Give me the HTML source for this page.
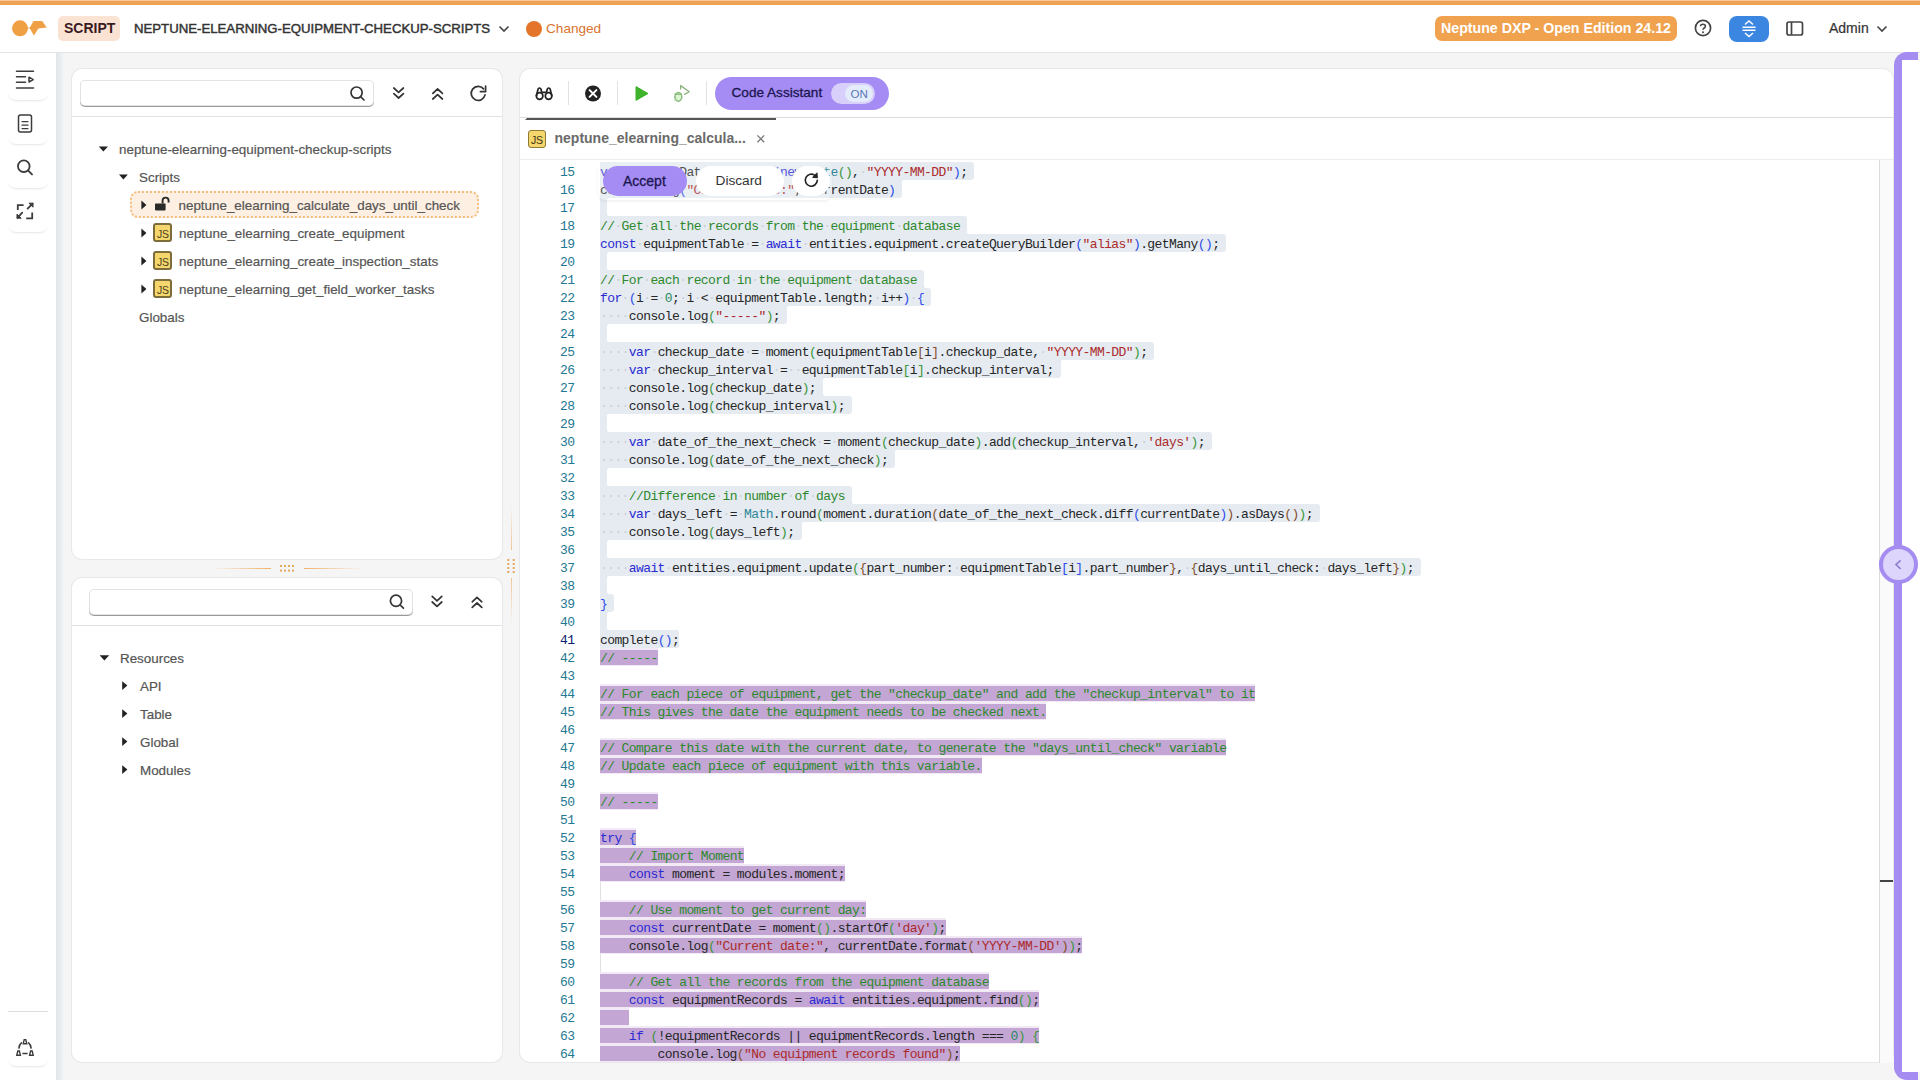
<!DOCTYPE html>
<html><head><meta charset="utf-8">
<style>
*{box-sizing:border-box;margin:0;padding:0}
html,body{width:1920px;height:1081px;overflow:hidden;background:#f5f5f5;font-family:"Liberation Sans",sans-serif;color:#333}
.abs{position:absolute}
#topbar{position:absolute;left:0;top:0;width:1920px;height:5px;background:#efa352;border-top:1px solid #f7c99a}
#header{position:absolute;left:0;top:5px;width:1920px;height:48px;background:#fff;border-bottom:1px solid #e4e4e4}
#sidebar{position:absolute;left:0;top:53px;width:56px;height:1028px;background:#fff}
#sideshade{position:absolute;left:56px;top:53px;width:8px;height:1028px;background:linear-gradient(90deg,#e3e5e7,#eaeef1 60%,#f5f5f5)}
.card{position:absolute;background:#fff;border-radius:10px;box-shadow:0 0 0 1px #e8e8e8}
.input{position:absolute;background:#fff;border-radius:4px;box-shadow:0 0 0 1px #e3e3e3, 0 1px 0 1px #9a9a9a}
svg{position:absolute;overflow:visible}
.t{position:absolute;white-space:pre}
.tree{font-size:13.4px;color:#555;-webkit-text-stroke:0.2px #555}
.jsi{position:absolute;width:19px;height:19px;background:#f4d66c;border:2px solid #7d6c3c;border-radius:3px}
.jsi span{position:absolute;left:2px;top:4px;font-size:10.5px;line-height:11px;color:#4a3f1c;letter-spacing:-0.3px}
.cl{position:absolute;left:600px;font-family:"Liberation Mono",monospace;font-size:13px;letter-spacing:-0.6px;white-space:pre;line-height:18px;height:18px;margin-top:2px;color:#262626}
.cl i{font-style:normal}
.cl .kw{color:#2a2ad2}.cl .com{color:#2d882d}.cl .str{color:#ac2a2a}.cl .num{color:#2a8a60}.cl .cls{color:#2f8798}
.cl .ws{color:#c9ced4;font-weight:normal}
.ln{position:absolute;left:520px;width:54.5px;text-align:right;font-family:"Liberation Mono",monospace;font-size:13px;letter-spacing:-0.6px;line-height:18px;margin-top:2px;color:#237893}
.ln.act{color:#0b216f}
.sel{position:absolute;left:600px;height:18px;background:#e5ebf1}
.cc{position:absolute;width:3px;height:3px}
.psel{position:absolute;left:600px;height:15px;background:#c3a6d4}
.psel2{position:absolute;left:600px;height:18px;background:#f1eaf5}
.pemp{position:absolute;left:600px;width:1px;height:18px;background:#e0e0e0}
</style></head>
<body>
<div id="topbar"></div>
<div id="header"></div>
<svg style="left:0;top:0" width="60" height="52"><circle cx="20" cy="28.3" r="8" fill="#f0a044"/><path d="M29.6 28 L33.5 21 L42.2 21 L46.7 27.6 L38.4 28.6 L33.9 35.6 Z" fill="#f0a044"/><path d="M27 28H31" stroke="#f0a044" stroke-width="0.8"/></svg>
<div class="abs" style="left:58px;top:16px;width:62px;height:25px;background:#fbe3d3;border-radius:5px"></div>
<div class="t" style="left:64px;top:20px;font-size:14px;font-weight:bold;color:#3a1a22;line-height:17px">SCRIPT</div>
<div class="t" style="left:134px;top:20px;font-size:13.2px;color:#333;line-height:17px;-webkit-text-stroke:0.45px #333">NEPTUNE-ELEARNING-EQUIPMENT-CHECKUP-SCRIPTS</div>
<svg style="left:498px;top:24.5px" width="12" height="8"><path d="M1.5 1.5 L6 6 L10.5 1.5" fill="none" stroke="#444" stroke-width="1.6"/></svg>
<div class="abs" style="left:526px;top:21px;width:16px;height:16px;border-radius:50%;background:#e4742a"></div>
<div class="t" style="left:546px;top:20px;font-size:13.6px;color:#d9742e;line-height:17px">Changed</div>
<div class="abs" style="left:1435px;top:16px;width:242px;height:25px;background:#f0a24f;border-radius:7px"></div>
<div class="t" style="left:1441px;top:20px;font-size:14.2px;font-weight:bold;color:#fff;line-height:17px">Neptune DXP - Open Edition 24.12</div>
<svg style="left:1694px;top:19px" width="18" height="18"><circle cx="9" cy="9" r="7.6" fill="none" stroke="#444" stroke-width="1.7"/><path d="M6.6 7.2 C6.6 4.6 11.4 4.6 11.4 7.2 C11.4 9 9 9 9 10.8" fill="none" stroke="#444" stroke-width="1.6"/><circle cx="9" cy="13.2" r="1" fill="#444"/></svg>
<div class="abs" style="left:1729px;top:15.5px;width:40px;height:26px;background:#3a86e0;border-radius:8px"></div>
<svg style="left:1729px;top:15px" width="40" height="27"><path d="M16 9.5 L20 6 L24 9.5 M16 18 L20 21.5 L24 18" fill="none" stroke="#fff" stroke-width="1.5"/><path d="M13.5 12.3 H26.5 M13.5 15.3 H26.5" stroke="#fff" stroke-width="1.4"/></svg>
<svg style="left:1786px;top:21px" width="18" height="16"><rect x="1" y="1" width="15.5" height="13" rx="2" fill="none" stroke="#444" stroke-width="1.7"/><path d="M5.5 1 V14" stroke="#444" stroke-width="1.7"/></svg>
<div class="t" style="left:1829px;top:20px;font-size:14px;color:#333;line-height:17px;-webkit-text-stroke:0.2px #333">Admin</div>
<svg style="left:1876px;top:24.5px" width="12" height="8"><path d="M1.5 1.5 L6 6 L10.5 1.5" fill="none" stroke="#444" stroke-width="1.6"/></svg>
<div id="sidebar"></div>
<div id="sideshade"></div>

<!-- sidebar icons -->
<div class="abs" style="left:8px;top:62px;width:40px;height:38px;border-radius:8px;box-shadow:0 2px 2px -1px #e6e6e6"></div>
<div class="abs" style="left:8px;top:106px;width:40px;height:38px;border-radius:8px;box-shadow:0 2px 2px -1px #e6e6e6"></div>
<div class="abs" style="left:8px;top:150px;width:40px;height:38px;border-radius:8px;box-shadow:0 2px 2px -1px #e6e6e6"></div>
<div class="abs" style="left:8px;top:194px;width:40px;height:38px;border-radius:8px;box-shadow:0 2px 2px -1px #e6e6e6"></div>
<svg style="left:0;top:60px" width="56" height="180">
 <g fill="none" stroke="#3c3c3c" stroke-width="1.5" stroke-linecap="round">
  <path d="M16.5 11.2H33.5M16.5 16.8H25.5M16.5 22.2H25.5M16.5 28H33.5"/>
  <path d="M29 17.2L33.2 19.6L29 22Z" stroke-linejoin="round"/>
  <rect x="18.5" y="55" width="13" height="17" rx="2"/>
  <path d="M22 61.6H28M22 65.2H28M22 68.6H28" stroke-width="1.2"/>
  <circle cx="23.8" cy="106.2" r="5.8" stroke-width="1.8"/>
  <path d="M28.2 110.6L32 114.4" stroke-width="1.9"/>
  <path d="M17.8 150V145.2H23.6M32.2 152.4V158.4H26.2" stroke-width="1.8" stroke-linecap="butt"/>
  <path d="M27.6 148.6L32.6 143.6M22.2 152.6L17.4 157.8" stroke-width="1.8"/>
 </g>
 <path d="M29 143.2H33V147.2Z M17 154V158.2H21.2Z" fill="#3c3c3c" stroke="#3c3c3c" stroke-width="1"/>
</svg>
<div class="abs" style="left:8px;top:1011px;width:40px;height:1px;background:#dedede"></div>
<div class="abs" style="left:8px;top:1028px;width:40px;height:38px;border-radius:8px;box-shadow:0 2px 2px -1px #e6e6e6"></div>
<svg style="left:0;top:1030px" width="56" height="40" fill="none" stroke="#3c3c3c" stroke-width="1.4">
 <path d="M23.2 13.8L24.2 9.6H25.8L26.8 13.8Z M16.8 25.2L17.8 21H19.4L20.4 25.2Z M29.6 25.2L30.6 21H32.2L33.2 25.2Z"/>
 <path d="M21.8 12.4C19.8 14 19 16.4 18.8 18.6M28.2 12.4C30.2 14 31 16.4 31.2 18.6M22.4 23.4H27.6" stroke-width="1.5"/>
</svg>

<!-- left top card -->
<div class="card" style="left:72px;top:69px;width:430px;height:490px"></div>
<div class="input" style="left:81px;top:81px;width:292px;height:24px"></div>
<div class="abs" style="left:72px;top:116px;width:430px;height:1px;background:#e3e3e3"></div>
<svg style="left:0;top:0" width="520" height="340" fill="none" stroke="#333" stroke-width="1.7" stroke-linecap="round" stroke-linejoin="round">
 <circle cx="356.6" cy="92.6" r="5.6"/><path d="M360.8 96.8L364 100"/>
 <path d="M393.8 88L398.6 92.4L403.4 88M393.8 93.6L398.6 98L403.4 93.6"/>
 <path d="M432.8 93.4L437.6 89L442.4 93.4M432.8 99L437.6 94.6L442.4 99"/>
 <path d="M485.03 94.92A7 7 0 1 1 483.56 88.9"/><path d="M485.6 86.2V91.6H480.4" stroke-width="1.7"/>
</svg>
<!-- tree top -->
<svg style="left:0;top:0" width="520" height="340" fill="#222">
 <path d="M98.8 146.5H108L103.4 151.6Z"/>
 <path d="M119 174.4H127.8L123.4 179.4Z"/>
</svg>
<div class="abs" style="left:129.5px;top:191px;width:349px;height:27px;background:#fdefe2;border:2px dotted #f5be80;border-radius:8px"></div>
<svg style="left:0;top:0" width="520" height="340" fill="#222">
 <path d="M141.4 200.6V209.4L146.4 205Z"/>
 <path d="M141.4 228.6V237.4L146.4 233Z"/>
 <path d="M141.4 256.6V265.4L146.4 261Z"/>
 <path d="M141.4 284.6V293.4L146.4 289Z"/>
 <rect x="155" y="203.4" width="10.6" height="7" rx="0.8" fill="#2a2a2a"/>
 <path d="M162.6 203.6V200.6A3 3 0 0 1 168.6 200.6V202.6" fill="none" stroke="#2a2a2a" stroke-width="1.9"/>
</svg>
<div class="t tree" style="left:119px;top:142px;line-height:16px">neptune-elearning-equipment-checkup-scripts</div>
<div class="t tree" style="left:139px;top:170px;line-height:16px">Scripts</div>
<div class="t tree" style="left:178.5px;top:198px;line-height:16px">neptune_elearning_calculate_days_until_check</div>
<div class="jsi" style="left:153px;top:223px"><span>JS</span></div>
<div class="jsi" style="left:153px;top:251px"><span>JS</span></div>
<div class="jsi" style="left:153px;top:279px"><span>JS</span></div>
<div class="t tree" style="left:179px;top:226px;line-height:16px">neptune_elearning_create_equipment</div>
<div class="t tree" style="left:179px;top:254px;line-height:16px">neptune_elearning_create_inspection_stats</div>
<div class="t tree" style="left:179px;top:282px;line-height:16px">neptune_elearning_get_field_worker_tasks</div>
<div class="t tree" style="left:139px;top:310px;line-height:16px">Globals</div>
<!-- left bottom card -->
<div class="card" style="left:72px;top:578px;width:430px;height:484px"></div>
<!-- bottom left card content -->
<div class="input" style="left:90px;top:590px;width:322px;height:24px"></div>
<div class="abs" style="left:72px;top:625px;width:430px;height:1px;background:#e3e3e3"></div>
<svg style="left:0;top:0" width="520" height="800" fill="none" stroke="#333" stroke-width="1.7" stroke-linecap="round" stroke-linejoin="round">
 <circle cx="396" cy="600.8" r="5.6"/><path d="M400.2 605L403.4 608.2"/>
 <path d="M432.2 596.4L437 600.8L441.8 596.4M432.2 602L437 606.4L441.8 602"/>
 <path d="M472.2 601.8L477 597.4L481.8 601.8M472.2 607.4L477 603L481.8 607.4"/>
</svg>
<svg style="left:0;top:0" width="520" height="800" fill="#222">
 <path d="M99.6 655.3H109.2L104.4 660.4Z"/>
 <path d="M122.2 681.2V690L127.4 685.6Z"/>
 <path d="M122.2 709.2V718L127.4 713.6Z"/>
 <path d="M122.2 737.2V746L127.4 741.6Z"/>
 <path d="M122.2 765.2V774L127.4 769.6Z"/>
</svg>
<div class="t tree" style="left:120px;top:651px;line-height:16px">Resources</div>
<div class="t tree" style="left:140px;top:679px;line-height:16px">API</div>
<div class="t tree" style="left:140px;top:707px;line-height:16px">Table</div>
<div class="t tree" style="left:140px;top:735px;line-height:16px">Global</div>
<div class="t tree" style="left:140px;top:763px;line-height:16px">Modules</div>

<!-- splitters -->
<div class="abs" style="left:212px;top:568px;width:59px;height:1px;background:linear-gradient(90deg,rgba(242,178,106,0),#f2b26a)"></div>
<div class="abs" style="left:304px;top:568px;width:59px;height:1px;background:linear-gradient(90deg,#f2b26a,rgba(242,178,106,0))"></div>
<svg style="left:279px;top:564px" width="16" height="9" fill="#e3a95e"><rect x="1" y="1" width="2" height="2"/><rect x="5" y="1" width="2" height="2"/><rect x="9" y="1" width="2" height="2"/><rect x="13" y="1" width="2" height="2"/><rect x="1" y="5.6" width="2" height="2"/><rect x="5" y="5.6" width="2" height="2"/><rect x="9" y="5.6" width="2" height="2"/><rect x="13" y="5.6" width="2" height="2"/></svg>
<div class="abs" style="left:511px;top:506px;width:1px;height:44px;background:linear-gradient(180deg,rgba(242,178,106,0),#f2c594)"></div>
<div class="abs" style="left:511px;top:578px;width:1px;height:46px;background:linear-gradient(180deg,#f2c594,rgba(242,178,106,0))"></div>
<svg style="left:506px;top:558px" width="10" height="17" fill="#e3a95e"><rect x="1.3" y="1" width="2" height="2"/><rect x="6.7" y="1" width="2" height="2"/><rect x="1.3" y="5" width="2" height="2"/><rect x="6.7" y="5" width="2" height="2"/><rect x="1.3" y="9" width="2" height="2"/><rect x="6.7" y="9" width="2" height="2"/><rect x="1.3" y="13" width="2" height="2"/><rect x="6.7" y="13" width="2" height="2"/></svg>

<!-- editor card -->
<div class="card" style="left:520px;top:69px;width:1373px;height:993px;overflow:hidden" id="ed">
</div>
<div class="abs" style="left:520px;top:117px;width:1373px;height:1px;background:#dcdcdc"></div>
<div class="abs" style="left:525px;top:118px;width:251px;height:2px;background:#555;clip-path:polygon(2px 0,100% 0,100% 100%,0 100%)"></div>
<!-- toolbar -->
<div class="abs" style="left:568px;top:81px;width:1px;height:24px;background:#e2e2e2"></div>
<div class="abs" style="left:617px;top:81px;width:1px;height:24px;background:#e2e2e2"></div>
<div class="abs" style="left:706px;top:81px;width:1px;height:24px;background:#e2e2e2"></div>
<svg style="left:0;top:0" width="900" height="120">
 <g fill="none" stroke="#222" stroke-width="1.7">
  <circle cx="539.6" cy="96" r="3.3"/><circle cx="548.6" cy="96" r="3.3"/>
  <path d="M536.4 96L538 89.2C538.4 87.6 540.6 87.6 541 89.2L541.6 92M551.8 96L550.2 89.2C549.8 87.6 547.6 87.6 547.2 89.2L546.6 92M541.6 92.4H546.6"/>
 </g>
 <circle cx="593" cy="93.5" r="8" fill="#222"/>
 <path d="M589.6 90.1L596.4 96.9M596.4 90.1L589.6 96.9" stroke="#fff" stroke-width="2" stroke-linecap="round"/>
 <path d="M636 86.6L648 93.5L636 100.4Z" fill="#3fb32a" stroke="#3fb32a" stroke-width="1" stroke-linejoin="round"/>
 <g fill="none" stroke="#7ccc66" stroke-width="1.3" stroke-linejoin="round">
  <path d="M680.6 89.6V85.6L689.2 91.8L684.2 94.6" stroke="#8ab37c"/>
  <ellipse cx="678.4" cy="96.8" rx="3.4" ry="4.4" fill="#dcf7d2" stroke="#86b878" stroke-width="1.4"/>
  <path d="M675.2 94.2H681.6" stroke="#86b878" stroke-width="1.4"/>
  <path d="M674.2 93.6L675 94.6M674 97H675M674.3 100.4L675.2 99.6" stroke="#86b878" stroke-width="1"/>
 </g>
</svg>
<div class="abs" style="left:715px;top:77px;width:174px;height:33px;border-radius:17px;background:#a48cf4"></div>
<div class="t" style="left:731.5px;top:85px;font-size:13.6px;line-height:16px;color:#1c1650;-webkit-text-stroke:0.3px #1c1650">Code Assistant</div>
<div class="abs" style="left:831px;top:83px;width:44px;height:20.5px;border-radius:11px;background:#d8cffb"></div>
<div class="abs" style="left:845px;top:84.5px;width:28px;height:17.5px;border-radius:9px;background:#e4ecfb"></div>
<div class="t" style="left:850.5px;top:87px;font-size:11.6px;line-height:13px;color:#5877b6">ON</div>
<!-- tab -->
<div class="jsi" style="left:528px;top:129.5px;width:18px;height:18px;border-width:1.6px;border-color:#8f7a36"><span style="left:2px;top:4px;color:#3a3010">JS</span></div>
<div class="t" style="left:554.5px;top:130px;font-size:14px;font-weight:bold;line-height:16px;color:#6a6a6a">neptune_elearning_calcula...</div>
<svg style="left:756px;top:134px" width="10" height="10"><path d="M1.4 1.4L8.2 8.2M8.2 1.4L1.4 8.2" stroke="#777" stroke-width="1.3"/></svg>
<div class="abs" style="left:520px;top:159px;width:1373px;height:1px;background:#ececec"></div>
<!-- code area -->
<div class="abs" id="codearea" style="left:520px;top:160px;width:1360px;height:902px;overflow:hidden;border-bottom-left-radius:10px">
<div class="abs" style="left:-520px;top:-160px;width:1920px;height:1081px">
<!--CODE-->
<div class="sel" style="top:162px;width:374.4px;border-radius:0 3px 3px 0"></div>
<div class="sel" style="top:180px;width:302.4px;border-radius:0 0px 3px 0"></div>
<div class="cc" style="left:902.4px;top:180px;background:radial-gradient(circle at 100% 100%,transparent 3px,#e5ebf1 3.6px)"></div>
<div class="sel" style="top:198px;width:7.2px;border-radius:0 0px 0px 0"></div>
<div class="cc" style="left:607.2px;top:198px;background:radial-gradient(circle at 100% 100%,transparent 3px,#e5ebf1 3.6px)"></div>
<div class="cc" style="left:607.2px;top:213px;background:radial-gradient(circle at 100% 0,transparent 3px,#e5ebf1 3.6px)"></div>
<div class="sel" style="top:216px;width:367.2px;border-radius:0 3px 0px 0"></div>
<div class="cc" style="left:967.2px;top:231px;background:radial-gradient(circle at 100% 0,transparent 3px,#e5ebf1 3.6px)"></div>
<div class="sel" style="top:234px;width:626.4px;border-radius:0 3px 3px 0"></div>
<div class="sel" style="top:252px;width:7.2px;border-radius:0 0px 0px 0"></div>
<div class="cc" style="left:607.2px;top:252px;background:radial-gradient(circle at 100% 100%,transparent 3px,#e5ebf1 3.6px)"></div>
<div class="cc" style="left:607.2px;top:267px;background:radial-gradient(circle at 100% 0,transparent 3px,#e5ebf1 3.6px)"></div>
<div class="sel" style="top:270px;width:324.0px;border-radius:0 3px 0px 0"></div>
<div class="cc" style="left:924.0px;top:285px;background:radial-gradient(circle at 100% 0,transparent 3px,#e5ebf1 3.6px)"></div>
<div class="sel" style="top:288px;width:331.2px;border-radius:0 3px 3px 0"></div>
<div class="sel" style="top:306px;width:187.2px;border-radius:0 0px 3px 0"></div>
<div class="cc" style="left:787.2px;top:306px;background:radial-gradient(circle at 100% 100%,transparent 3px,#e5ebf1 3.6px)"></div>
<div class="sel" style="top:324px;width:7.2px;border-radius:0 0px 0px 0"></div>
<div class="cc" style="left:607.2px;top:324px;background:radial-gradient(circle at 100% 100%,transparent 3px,#e5ebf1 3.6px)"></div>
<div class="cc" style="left:607.2px;top:339px;background:radial-gradient(circle at 100% 0,transparent 3px,#e5ebf1 3.6px)"></div>
<div class="sel" style="top:342px;width:554.4px;border-radius:0 3px 3px 0"></div>
<div class="sel" style="top:360px;width:460.8px;border-radius:0 0px 3px 0"></div>
<div class="cc" style="left:1060.8px;top:360px;background:radial-gradient(circle at 100% 100%,transparent 3px,#e5ebf1 3.6px)"></div>
<div class="sel" style="top:378px;width:223.2px;border-radius:0 0px 0px 0"></div>
<div class="cc" style="left:823.2px;top:378px;background:radial-gradient(circle at 100% 100%,transparent 3px,#e5ebf1 3.6px)"></div>
<div class="cc" style="left:823.2px;top:393px;background:radial-gradient(circle at 100% 0,transparent 3px,#e5ebf1 3.6px)"></div>
<div class="sel" style="top:396px;width:252.0px;border-radius:0 3px 3px 0"></div>
<div class="sel" style="top:414px;width:7.2px;border-radius:0 0px 0px 0"></div>
<div class="cc" style="left:607.2px;top:414px;background:radial-gradient(circle at 100% 100%,transparent 3px,#e5ebf1 3.6px)"></div>
<div class="cc" style="left:607.2px;top:429px;background:radial-gradient(circle at 100% 0,transparent 3px,#e5ebf1 3.6px)"></div>
<div class="sel" style="top:432px;width:612.0px;border-radius:0 3px 3px 0"></div>
<div class="sel" style="top:450px;width:295.2px;border-radius:0 0px 3px 0"></div>
<div class="cc" style="left:895.2px;top:450px;background:radial-gradient(circle at 100% 100%,transparent 3px,#e5ebf1 3.6px)"></div>
<div class="sel" style="top:468px;width:7.2px;border-radius:0 0px 0px 0"></div>
<div class="cc" style="left:607.2px;top:468px;background:radial-gradient(circle at 100% 100%,transparent 3px,#e5ebf1 3.6px)"></div>
<div class="cc" style="left:607.2px;top:483px;background:radial-gradient(circle at 100% 0,transparent 3px,#e5ebf1 3.6px)"></div>
<div class="sel" style="top:486px;width:252.0px;border-radius:0 3px 0px 0"></div>
<div class="cc" style="left:852.0px;top:501px;background:radial-gradient(circle at 100% 0,transparent 3px,#e5ebf1 3.6px)"></div>
<div class="sel" style="top:504px;width:720.0px;border-radius:0 3px 3px 0"></div>
<div class="sel" style="top:522px;width:201.6px;border-radius:0 0px 3px 0"></div>
<div class="cc" style="left:801.6px;top:522px;background:radial-gradient(circle at 100% 100%,transparent 3px,#e5ebf1 3.6px)"></div>
<div class="sel" style="top:540px;width:7.2px;border-radius:0 0px 0px 0"></div>
<div class="cc" style="left:607.2px;top:540px;background:radial-gradient(circle at 100% 100%,transparent 3px,#e5ebf1 3.6px)"></div>
<div class="cc" style="left:607.2px;top:555px;background:radial-gradient(circle at 100% 0,transparent 3px,#e5ebf1 3.6px)"></div>
<div class="sel" style="top:558px;width:820.8px;border-radius:0 3px 3px 0"></div>
<div class="sel" style="top:576px;width:7.2px;border-radius:0 0px 0px 0"></div>
<div class="cc" style="left:607.2px;top:576px;background:radial-gradient(circle at 100% 100%,transparent 3px,#e5ebf1 3.6px)"></div>
<div class="cc" style="left:607.2px;top:591px;background:radial-gradient(circle at 100% 0,transparent 3px,#e5ebf1 3.6px)"></div>
<div class="sel" style="top:594px;width:14.4px;border-radius:0 3px 3px 0"></div>
<div class="sel" style="top:612px;width:7.2px;border-radius:0 0px 0px 0"></div>
<div class="cc" style="left:607.2px;top:612px;background:radial-gradient(circle at 100% 100%,transparent 3px,#e5ebf1 3.6px)"></div>
<div class="cc" style="left:607.2px;top:627px;background:radial-gradient(circle at 100% 0,transparent 3px,#e5ebf1 3.6px)"></div>
<div class="sel" style="top:630px;width:79.2px;border-radius:0 3px 3px 0"></div>
<div class="psel2" style="top:648px;width:57.6px"></div><div class="psel" style="top:650px;width:57.6px"></div>
<div class="psel2" style="top:684px;width:655.2px"></div><div class="psel" style="top:686px;width:655.2px"></div>
<div class="psel2" style="top:702px;width:446.4px"></div><div class="psel" style="top:704px;width:446.4px"></div>
<div class="psel2" style="top:738px;width:626.4px"></div><div class="psel" style="top:740px;width:626.4px"></div>
<div class="psel2" style="top:756px;width:381.6px"></div><div class="psel" style="top:758px;width:381.6px"></div>
<div class="psel2" style="top:792px;width:57.6px"></div><div class="psel" style="top:794px;width:57.6px"></div>
<div class="psel2" style="top:828px;width:36.0px"></div><div class="psel" style="top:830px;width:36.0px"></div>
<div class="psel2" style="top:846px;width:144.0px"></div><div class="psel" style="top:848px;width:144.0px"></div>
<div class="psel2" style="top:864px;width:244.8px"></div><div class="psel" style="top:866px;width:244.8px"></div>
<div class="pemp" style="top:882px"></div>
<div class="psel2" style="top:900px;width:266.4px"></div><div class="psel" style="top:902px;width:266.4px"></div>
<div class="psel2" style="top:918px;width:345.6px"></div><div class="psel" style="top:920px;width:345.6px"></div>
<div class="psel2" style="top:936px;width:482.4px"></div><div class="psel" style="top:938px;width:482.4px"></div>
<div class="pemp" style="top:954px"></div>
<div class="psel2" style="top:972px;width:388.8px"></div><div class="psel" style="top:974px;width:388.8px"></div>
<div class="psel2" style="top:990px;width:439.2px"></div><div class="psel" style="top:992px;width:439.2px"></div>
<div class="psel2" style="top:1008px;width:28.8px"></div><div class="psel" style="top:1010px;width:28.8px"></div>
<div class="psel2" style="top:1026px;width:439.2px"></div><div class="psel" style="top:1028px;width:439.2px"></div>
<div class="psel2" style="top:1044px;width:360.0px"></div><div class="psel" style="top:1046px;width:360.0px"></div>
<div class="ln" style="top:162px">15</div>
<div class="ln" style="top:180px">16</div>
<div class="ln" style="top:198px">17</div>
<div class="ln" style="top:216px">18</div>
<div class="ln" style="top:234px">19</div>
<div class="ln" style="top:252px">20</div>
<div class="ln" style="top:270px">21</div>
<div class="ln" style="top:288px">22</div>
<div class="ln" style="top:306px">23</div>
<div class="ln" style="top:324px">24</div>
<div class="ln" style="top:342px">25</div>
<div class="ln" style="top:360px">26</div>
<div class="ln" style="top:378px">27</div>
<div class="ln" style="top:396px">28</div>
<div class="ln" style="top:414px">29</div>
<div class="ln" style="top:432px">30</div>
<div class="ln" style="top:450px">31</div>
<div class="ln" style="top:468px">32</div>
<div class="ln" style="top:486px">33</div>
<div class="ln" style="top:504px">34</div>
<div class="ln" style="top:522px">35</div>
<div class="ln" style="top:540px">36</div>
<div class="ln" style="top:558px">37</div>
<div class="ln" style="top:576px">38</div>
<div class="ln" style="top:594px">39</div>
<div class="ln" style="top:612px">40</div>
<div class="ln act" style="top:630px">41</div>
<div class="ln" style="top:648px">42</div>
<div class="ln" style="top:666px">43</div>
<div class="ln" style="top:684px">44</div>
<div class="ln" style="top:702px">45</div>
<div class="ln" style="top:720px">46</div>
<div class="ln" style="top:738px">47</div>
<div class="ln" style="top:756px">48</div>
<div class="ln" style="top:774px">49</div>
<div class="ln" style="top:792px">50</div>
<div class="ln" style="top:810px">51</div>
<div class="ln" style="top:828px">52</div>
<div class="ln" style="top:846px">53</div>
<div class="ln" style="top:864px">54</div>
<div class="ln" style="top:882px">55</div>
<div class="ln" style="top:900px">56</div>
<div class="ln" style="top:918px">57</div>
<div class="ln" style="top:936px">58</div>
<div class="ln" style="top:954px">59</div>
<div class="ln" style="top:972px">60</div>
<div class="ln" style="top:990px">61</div>
<div class="ln" style="top:1008px">62</div>
<div class="ln" style="top:1026px">63</div>
<div class="ln" style="top:1044px">64</div>
<div class="cl" style="top:162px"><i class="kw">var</i><b class="ws">·</b>currentDate<b class="ws">·</b>=<b class="ws">·</b>moment<span style="color:#2f4ee8">(</span><i class="kw">new</i><b class="ws">·</b><i class="cls">Date</i><span style="color:#3a963a">(</span><span style="color:#3a963a">)</span>,<b class="ws">·</b><i class="str">"YYYY-MM-DD"</i><span style="color:#2f4ee8">)</span>;</div>
<div class="cl" style="top:180px">console.log<span style="color:#2f4ee8">(</span><i class="str">"Current<b class="ws">·</b>date:"</i>,<b class="ws">·</b>currentDate<span style="color:#2f4ee8">)</span></div>
<div class="cl" style="top:198px"></div>
<div class="cl" style="top:216px"><i class="com">//<b class="ws">·</b>Get<b class="ws">·</b>all<b class="ws">·</b>the<b class="ws">·</b>records<b class="ws">·</b>from<b class="ws">·</b>the<b class="ws">·</b>equipment<b class="ws">·</b>database</i></div>
<div class="cl" style="top:234px"><i class="kw">const</i><b class="ws">·</b>equipmentTable<b class="ws">·</b>=<b class="ws">·</b><i class="kw">await</i><b class="ws">·</b>entities.equipment.createQueryBuilder<span style="color:#2f4ee8">(</span><i class="str">"alias"</i><span style="color:#2f4ee8">)</span>.getMany<span style="color:#2f4ee8">(</span><span style="color:#2f4ee8">)</span>;</div>
<div class="cl" style="top:252px"></div>
<div class="cl" style="top:270px"><i class="com">//<b class="ws">·</b>For<b class="ws">·</b>each<b class="ws">·</b>record<b class="ws">·</b>in<b class="ws">·</b>the<b class="ws">·</b>equipment<b class="ws">·</b>database</i></div>
<div class="cl" style="top:288px"><i class="kw">for</i><b class="ws">·</b><span style="color:#2f4ee8">(</span>i<b class="ws">·</b>=<b class="ws">·</b><i class="num">0</i>;<b class="ws">·</b>i<b class="ws">·</b>&lt;<b class="ws">·</b>equipmentTable.length;<b class="ws">·</b>i++<span style="color:#2f4ee8">)</span><b class="ws">·</b><span style="color:#2f4ee8">{</span></div>
<div class="cl" style="top:306px"><span class="ws">····</span>console.log<span style="color:#3a963a">(</span><i class="str">"-----"</i><span style="color:#3a963a">)</span>;</div>
<div class="cl" style="top:324px"></div>
<div class="cl" style="top:342px"><span class="ws">····</span><i class="kw">var</i><b class="ws">·</b>checkup_date<b class="ws">·</b>=<b class="ws">·</b>moment<span style="color:#3a963a">(</span>equipmentTable<span style="color:#86502a">[</span>i<span style="color:#86502a">]</span>.checkup_date,<b class="ws">·</b><i class="str">"YYYY-MM-DD"</i><span style="color:#3a963a">)</span>;</div>
<div class="cl" style="top:360px"><span class="ws">····</span><i class="kw">var</i><b class="ws">·</b>checkup_interval<b class="ws">·</b>=<b class="ws">·</b><b class="ws">·</b>equipmentTable<span style="color:#3a963a">[</span>i<span style="color:#3a963a">]</span>.checkup_interval;</div>
<div class="cl" style="top:378px"><span class="ws">····</span>console.log<span style="color:#3a963a">(</span>checkup_date<span style="color:#3a963a">)</span>;</div>
<div class="cl" style="top:396px"><span class="ws">····</span>console.log<span style="color:#3a963a">(</span>checkup_interval<span style="color:#3a963a">)</span>;</div>
<div class="cl" style="top:414px"></div>
<div class="cl" style="top:432px"><span class="ws">····</span><i class="kw">var</i><b class="ws">·</b>date_of_the_next_check<b class="ws">·</b>=<b class="ws">·</b>moment<span style="color:#3a963a">(</span>checkup_date<span style="color:#3a963a">)</span>.add<span style="color:#3a963a">(</span>checkup_interval,<b class="ws">·</b><i class="str">'days'</i><span style="color:#3a963a">)</span>;</div>
<div class="cl" style="top:450px"><span class="ws">····</span>console.log<span style="color:#3a963a">(</span>date_of_the_next_check<span style="color:#3a963a">)</span>;</div>
<div class="cl" style="top:468px"></div>
<div class="cl" style="top:486px"><span class="ws">····</span><i class="com">//Difference<b class="ws">·</b>in<b class="ws">·</b>number<b class="ws">·</b>of<b class="ws">·</b>days</i></div>
<div class="cl" style="top:504px"><span class="ws">····</span><i class="kw">var</i><b class="ws">·</b>days_left<b class="ws">·</b>=<b class="ws">·</b><i class="cls">Math</i>.round<span style="color:#3a963a">(</span>moment.duration<span style="color:#86502a">(</span>date_of_the_next_check.diff<span style="color:#2f4ee8">(</span>currentDate<span style="color:#2f4ee8">)</span><span style="color:#86502a">)</span>.asDays<span style="color:#86502a">(</span><span style="color:#86502a">)</span><span style="color:#3a963a">)</span>;</div>
<div class="cl" style="top:522px"><span class="ws">····</span>console.log<span style="color:#3a963a">(</span>days_left<span style="color:#3a963a">)</span>;</div>
<div class="cl" style="top:540px"></div>
<div class="cl" style="top:558px"><span class="ws">····</span><i class="kw">await</i><b class="ws">·</b>entities.equipment.update<span style="color:#3a963a">(</span><span style="color:#86502a">{</span>part_number:<b class="ws">·</b>equipmentTable<span style="color:#2f4ee8">[</span>i<span style="color:#2f4ee8">]</span>.part_number<span style="color:#86502a">}</span>,<b class="ws">·</b><span style="color:#86502a">{</span>days_until_check:<b class="ws">·</b>days_left<span style="color:#86502a">}</span><span style="color:#3a963a">)</span>;</div>
<div class="cl" style="top:576px"></div>
<div class="cl" style="top:594px"><span style="color:#2f4ee8">}</span></div>
<div class="cl" style="top:612px"></div>
<div class="cl" style="top:630px">complete<span style="color:#2f4ee8">(</span><span style="color:#2f4ee8">)</span>;</div>
<div class="cl" style="top:648px"><i class="com">// -----</i></div>
<div class="cl" style="top:666px"></div>
<div class="cl" style="top:684px"><i class="com">// For each piece of equipment, get the "checkup_date" and add the "checkup_interval" to it</i></div>
<div class="cl" style="top:702px"><i class="com">// This gives the date the equipment needs to be checked next.</i></div>
<div class="cl" style="top:720px"></div>
<div class="cl" style="top:738px"><i class="com">// Compare this date with the current date, to generate the "days_until_check" variable</i></div>
<div class="cl" style="top:756px"><i class="com">// Update each piece of equipment with this variable.</i></div>
<div class="cl" style="top:774px"></div>
<div class="cl" style="top:792px"><i class="com">// -----</i></div>
<div class="cl" style="top:810px"></div>
<div class="cl" style="top:828px"><i class="kw">try</i> <span style="color:#2f4ee8">{</span></div>
<div class="cl" style="top:846px">    <i class="com">// Import Moment</i></div>
<div class="cl" style="top:864px">    <i class="kw">const</i> moment = modules.moment;</div>
<div class="cl" style="top:882px"></div>
<div class="cl" style="top:900px">    <i class="com">// Use moment to get current day:</i></div>
<div class="cl" style="top:918px">    <i class="kw">const</i> currentDate = moment<span style="color:#3a963a">(</span><span style="color:#3a963a">)</span>.startOf<span style="color:#3a963a">(</span><i class="str">'day'</i><span style="color:#3a963a">)</span>;</div>
<div class="cl" style="top:936px">    console.log<span style="color:#3a963a">(</span><i class="str">"Current date:"</i>, currentDate.format<span style="color:#86502a">(</span><i class="str">'YYYY-MM-DD'</i><span style="color:#86502a">)</span><span style="color:#3a963a">)</span>;</div>
<div class="cl" style="top:954px"></div>
<div class="cl" style="top:972px">    <i class="com">// Get all the records from the equipment database</i></div>
<div class="cl" style="top:990px">    <i class="kw">const</i> equipmentRecords = <i class="kw">await</i> entities.equipment.find<span style="color:#3a963a">(</span><span style="color:#3a963a">)</span>;</div>
<div class="cl" style="top:1008px">    </div>
<div class="cl" style="top:1026px">    <i class="kw">if</i> <span style="color:#3a963a">(</span>!equipmentRecords || equipmentRecords.length === <i class="num">0</i><span style="color:#3a963a">)</span> <span style="color:#3a963a">{</span></div>
<div class="cl" style="top:1044px">        console.log<span style="color:#86502a">(</span><i class="str">"No equipment records found"</i><span style="color:#86502a">)</span>;</div>
<!--/CODE-->
</div>
</div>
<!-- scrollbar -->
<div class="abs" style="left:1879px;top:160px;width:14px;height:903px;background:#fafafa;border-left:1px solid #dcdcdc"></div>
<div class="abs" style="left:1880px;top:880px;width:13px;height:2px;background:#444"></div>
<!-- accept discard -->
<div class="abs" style="left:598px;top:161px;width:234px;height:39px;background:rgba(255,255,255,0.2);border-radius:8px;box-shadow:0 2px 3px rgba(0,0,0,0.05)"></div>
<div class="abs" style="left:603px;top:166px;width:83.5px;height:29.5px;border-radius:15px;background:#a48cf4"></div>
<div class="t" style="left:623px;top:173px;font-size:14px;line-height:16px;color:#1c1650;-webkit-text-stroke:0.3px #1c1650">Accept</div>
<div class="abs" style="left:695.5px;top:166px;width:88.5px;height:30px;border-radius:15px;background:#fff"></div>
<div class="t" style="left:715.5px;top:173px;font-size:13.7px;line-height:16px;color:#333">Discard</div>
<div class="abs" style="left:792px;top:166px;width:37.5px;height:30px;border-radius:15px;background:#fff"></div>
<svg style="left:800px;top:169px" width="22" height="22" fill="none" stroke="#222" stroke-width="1.6" stroke-linecap="round"><path d="M17.3 11.4A6 6 0 1 1 15.2 6.6"/><path d="M17 4.2L17.4 8.8L13 8.4Z" fill="#222" stroke-linejoin="round" stroke-width="1"/></svg>
<!-- purple right border -->
<div class="abs" style="left:1894px;top:52px;width:24px;height:1028px;border:8px solid #a48cf0;border-right:none;border-radius:13px 0 0 13px"></div>
<div class="abs" style="left:1902px;top:60px;width:18px;height:1012px;background:#fff"></div>
<div class="abs" style="left:1878.5px;top:544.5px;width:39px;height:39px;border-radius:50%;border:4px solid #a48cf0;background:#ddd5fb"></div>
<div class="abs" style="left:0;top:1080px;width:1920px;height:1px;background:#fff"></div>
<svg style="left:1890px;top:556px" width="16" height="16"><path d="M10.6 4.4L6 8.6L10.6 12.8" fill="none" stroke="#8d7fd0" stroke-width="1.6"/></svg>

</body></html>
